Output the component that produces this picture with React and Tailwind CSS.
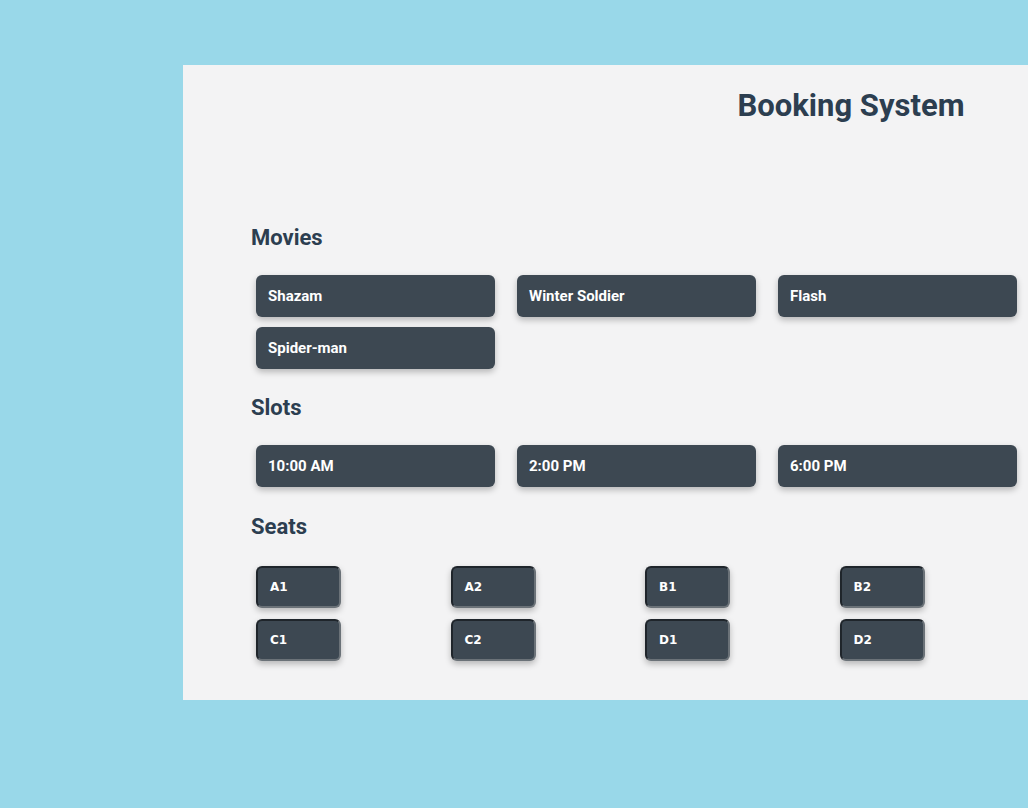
export default function App() {
  const movies = ["Shazam", "Winter Soldier", "Flash", "Spider-man"];
  const slots = ["10:00 AM", "2:00 PM", "6:00 PM"];
  const seats = ["A1", "A2", "B1", "B2", "C1", "C2", "D1", "D2"];
  const font = { fontFamily: '"Roboto", "Liberation Sans", sans-serif' };
  return (
    <div className="w-full h-[808px] overflow-hidden bg-[#99d8e9] pt-[65px] pl-[183px]" style={font}>
      <div className="w-[1336px] h-[635px] bg-[#f3f3f4]">
        <h1 className="text-center pt-[22px] text-[31px] leading-[38px] font-bold text-[#2c3e50]">Booking System</h1>
        <div className="pl-[68px] pt-[100px] w-[851px]">
          <h2 className="text-[22px] leading-[26px] font-bold text-[#2c3e50]">Movies</h2>
          <div className="grid grid-cols-3 gap-x-[22px] gap-y-[10px] pl-[5px] pt-[24px] w-[766px]">
            {movies.map((m) => (
              <div key={m} className="h-[42px] rounded-[6px] bg-[#3d4852] text-white text-[15px] font-bold flex items-center px-[12px] shadow-[0_3px_6px_rgba(0,0,0,0.25)]">{m}</div>
            ))}
          </div>
          <h2 className="text-[22px] leading-[26px] font-bold text-[#2c3e50] mt-[26px]">Slots</h2>
          <div className="grid grid-cols-3 gap-x-[22px] pl-[5px] pt-[24px] w-[766px]">
            {slots.map((m) => (
              <div key={m} className="h-[42px] rounded-[6px] bg-[#3d4852] text-white text-[15px] font-bold flex items-center px-[12px] shadow-[0_3px_6px_rgba(0,0,0,0.25)]">{m}</div>
            ))}
          </div>
          <h2 className="text-[22px] leading-[26px] font-bold text-[#2c3e50] mt-[27px]">Seats</h2>
          <div className="grid grid-cols-4 gap-y-[11px] pl-[5px] pt-[26px] w-[783px]">
            {seats.map((s) => (
              <div key={s}>
                <div className="w-[85px] h-[42px] rounded-[6px] bg-[#3d4852] text-white text-[12px] font-bold flex items-center px-[12px] border-2 border-t-[#1f252b] border-l-[#1f252b] border-r-[#6b7278] border-b-[#6b7278] shadow-[0_3px_6px_rgba(0,0,0,0.25)]" style={{ fontFamily: '"DejaVu Sans", sans-serif' }}>{s}</div>
              </div>
            ))}
          </div>
        </div>
      </div>
    </div>
  );
}
